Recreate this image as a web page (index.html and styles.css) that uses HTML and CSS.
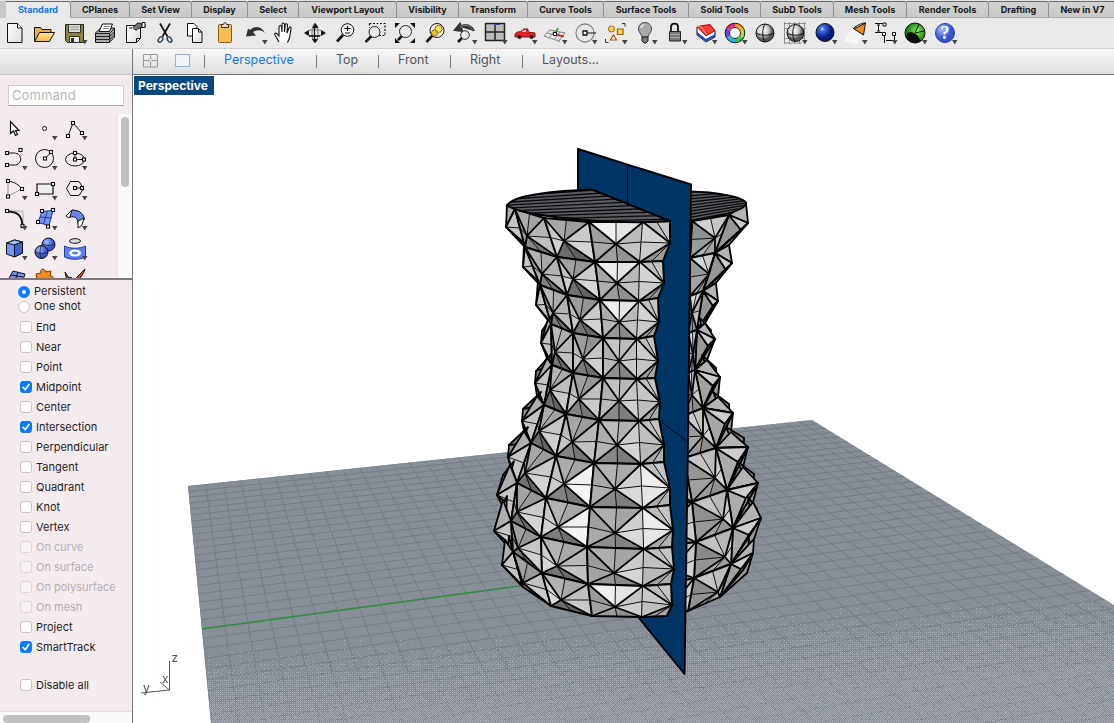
FILE: index.html
```html
<!DOCTYPE html>
<html lang="en">
<head>
<meta charset="utf-8">
<title>Perspective</title>
<link rel="stylesheet" href="styles.css">
</head>
<body>
<div class="app">
  <nav class="tabs" id="tabs"></nav>
  <div class="toolbar" id="toolbar"></div>
  <div class="body">
    <aside class="side">
      <div class="side-head"></div>
      <div class="cmd"><div class="cmd-box">Command</div></div>
      <div class="palette">
        <div class="tools" id="tools"></div>
        <div class="vtrack"><div class="vthumb"></div></div>
      </div>
      <div class="osnap">
        <div class="radio on"><i></i>Persistent</div>
        <div class="radio"><i></i>One shot</div>
        <div class="checks" id="checks"></div>
      </div>
      <div class="htrack"><div class="hthumb"></div></div>
    </aside>
    <main class="main">
      <div class="views">
        <svg class="layout-icon" width="60" height="25" viewBox="133 49 60 25" fill="none">
          <path d="M143.500 54.500h14v12.500h-14zM150.500 54v13M143 60.500h15" stroke="#999"/>
          <rect x="149" y="59" width="3" height="3" fill="#f4f4f4" stroke="#aaa" stroke-width=".6"/>
          <rect x="175.500" y="54.500" width="14" height="12" fill="#eef3fa" stroke="#7fb5f5"/>
        </svg>
        <span class="bar b0"></span><span class="view sel">Perspective</span>
        <span class="bar b1"></span><span class="view v2">Top</span>
        <span class="bar b2"></span><span class="view v3">Front</span>
        <span class="bar b3"></span><span class="view v4">Right</span>
        <span class="bar b4"></span><span class="view v5">Layouts...</span>
      </div>
      <div class="viewport">
        <canvas class="ground" id="ground" width="981" height="648"></canvas>
        <svg class="scene" id="scene" width="981" height="648" viewBox="133 75 981 648"></svg>
        <div class="vp-title">Perspective</div>
      </div>
    </main>
  </div>
</div>
<script src="app.js"></script>
</body>
</html>
```
FILE: styles.css
```css
* { box-sizing: border-box; }
body { margin: 0; font-family: Inter, "Liberation Sans", sans-serif; color: #1f1f1f; background: #fff; }
.app { width: 1114px; height: 723px; overflow: hidden; display: flex; flex-direction: column; }
.tabs { height: 18px; flex: none; display: flex; background: #c9c9c9; border-top: 1px solid #e4e4e4; padding-left: 6px; overflow: hidden; }
.tab { flex: none; height: 17px; border-top: 1px solid #6c6c6c; border-right: 1px solid #8f8f8f; border-bottom: 1px solid #aaa; border-radius: 0 3px 0 0; text-align: center; font-weight: 700; font-size: 9px; line-height: 15px; color: #161616; background: linear-gradient(#d2d2d2, #c9c9c9); white-space: nowrap; }
.tab.on { color: #1079f2; background: #e9e9e9; border-bottom-color: #e9e9e9; }
.toolbar { height: 31px; flex: none; display: flex; background: #e9e9e9; border-bottom: 1px solid #d9cdd0; }
.toolbar svg { flex: none; width: 30px; height: 30px; display: block; }
.body { flex: 1; display: flex; min-height: 0; }
.side { width: 133px; flex: none; background: #f4ebef; border-right: 1px solid #777; display: flex; flex-direction: column; }
.side-head { height: 26px; background: linear-gradient(#f3f3f3, #dcdcdc); border-bottom: 1px solid #c8c4c6; flex: none; }
.cmd { height: 39px; padding: 10px 8px 0; flex: none; }
.cmd-box { height: 21px; background: #fff; border: 1px solid #d4ccd0; border-bottom-color: #aaa; padding-left: 3px; font-size: 13px; line-height: 19px; color: #b9b9b9; letter-spacing: .1px; }
.palette { height: 166px; flex: none; display: flex; justify-content: space-between; border-bottom: 2px solid #7b777a; overflow: hidden; }
.tools { width: 90px; height: 180px; display: grid; grid-template-columns: repeat(3, 30px); grid-auto-rows: 30px; }
.tools svg { display: block; width: 30px; height: 30px; }
.vtrack { width: 15px; background: #fafafa; border-left: 1px solid #e6e2e4; padding: 3px 0 0 3px; }
.vthumb { width: 8px; height: 70px; border-radius: 4px; background: #c1c1c1; }
.osnap { flex: 1; padding: 4px 0 0 18px; font-size: 11px; }
.radio { height: 15px; display: flex; align-items: center; line-height: 15px; gap: 4px; }
.radio i { width: 12px; height: 12px; border-radius: 50%; background: #fff; border: 1px solid #c9c3c6; }
.radio.on i { border: 4px solid #0a7bfd; }
.checks { padding: 3px 0 0 2px; }
.check { height: 20px; display: flex; align-items: center; gap: 4px; white-space: nowrap; }
.check.last { margin-top: 18px; }
.check i { width: 12px; height: 12px; border-radius: 3px; background: #fff; border: 1px solid #c9c3c6; flex: none; }
.check.on i { background: #0a7bfd; border-color: #0a7bfd; }
.check i svg { display: block; width: 10px; height: 10px; }
.check.off { color: #b5aeb2; }
.check.off i { background: #f7f1f4; border-color: #dcd5d8; }
.htrack { height: 12px; flex: none; background: #fafafa; border-top: 1px solid #e2dcdf; padding: 3px 0 0 3px; }
.hthumb { width: 87px; height: 8px; border-radius: 4px; background: #c1c1c1; }
.main { flex: 1; display: flex; flex-direction: column; min-width: 0; }
.views { height: 26px; flex: none; display: flex; align-items: flex-start; background: linear-gradient(#f7f7f7, #dedede); border-bottom: 1px solid #777; font-size: 12.5px; line-height: 21px; color: #555; }
.view { white-space: nowrap; }
.view.sel { color: #1079f2; width: 92px; }
.bar { width: 1px; height: 13px; margin-top: 6px; background: #777; flex: none; }
.b0 { margin: 6px 19px 0 11px; }
.b1 { margin-right: 19px; }
.v2 { width: 42px; }
.b2 { margin-right: 19px; }
.v3 { width: 52px; }
.b3 { margin-right: 19px; }
.v4 { width: 52px; }
.b4 { margin-right: 19px; }
.viewport { position: relative; flex: 1; background: #fff; overflow: hidden; }
.ground, .scene { position: absolute; left: 0; top: 0; display: block; }
.vp-title { position: absolute; left: 1px; top: 1px; height: 19px; width: 80px; background: #05477f; color: #fff; font-weight: 700; font-size: 12px; line-height: 19px; padding-left: 4px; white-space: nowrap; }
.axis-label { font: 12px Inter, sans-serif; fill: #555; }
```
FILE: app.js
```js
const byId = id => document.getElementById(id);

/* tabs: label and width */
byId('tabs').innerHTML = [['Standard', 65], ['CPlanes', 59], ['Set View', 62], ['Display', 56], ['Select', 51],
  ['Viewport Layout', 98], ['Visibility', 62], ['Transform', 69], ['Curve Tools', 76], ['Surface Tools', 85],
  ['Solid Tools', 72], ['SubD Tools', 73], ['Mesh Tools', 73], ['Render Tools', 82], ['Drafting', 60], ['New in V7', 68]]
  .map((t, i) => `<div class="tab${i ? '' : ' on'}" style="width:${t[1]}px">${t[0]}</div>`).join('');

const arrow = '<path d="M22 22h5.500l-2.700 4.500z" fill="#444"/>';
const K = 'stroke="#111" fill="none"';
const ball = (x, y, r, c) => `<circle cx="${x}" cy="${y}" r="${r}" fill="url(#${c})" stroke="#111" stroke-width="1"/>`;
const defs = `<defs>
<linearGradient id="paper" x1="0" y1="0" x2="1" y2="1"><stop offset="0" stop-color="#fff"/><stop offset="1" stop-color="#ddd"/></linearGradient>
<linearGradient id="gold" x1="0" y1="0" x2="0" y2="1"><stop offset="0" stop-color="#ffe9a0"/><stop offset="1" stop-color="#f4b73c"/></linearGradient>
<radialGradient id="blueBall" cx=".35" cy=".3"><stop offset="0" stop-color="#cfe0ff"/><stop offset=".25" stop-color="#3f6df0"/><stop offset="1" stop-color="#061b80"/></radialGradient>
<radialGradient id="softBlue" cx=".35" cy=".3"><stop offset="0" stop-color="#a9bdfd"/><stop offset="1" stop-color="#3555cf"/></radialGradient>
<radialGradient id="greyBall" cx=".4" cy=".35"><stop offset="0" stop-color="#fff"/><stop offset=".6" stop-color="#ccc"/><stop offset="1" stop-color="#555"/></radialGradient>
<radialGradient id="greenBall" cx=".6" cy=".4"><stop offset="0" stop-color="#8df05c"/><stop offset="1" stop-color="#127a10"/></radialGradient>
</defs>`;
const page = '<path d="M7.500 5.500h10l4.500 4.500v14.500h-14.500z" fill="url(#paper)" stroke="#111"/><path d="M17.500 5.500v4.500h4.500" fill="#fff" stroke="#111"/>';

const toolbar = [
  defs + page,
  '<path d="M4.500 23V9.500h6l1.500 2h9v3" fill="#e9b13a" stroke="#111"/><path d="M4.500 23.500l5-9h15l-5 9z" fill="url(#gold)" stroke="#111"/>',
  '<path d="M5.500 6.500h18v18h-16l-2-2z" fill="#8b8540" stroke="#222"/><path d="M8.500 6.500h12v8h-12z" fill="#dadada" stroke="#333"/><path d="M10 9h9M10 11.500h9" stroke="#999"/><path d="M9.500 18.500h10v6h-10z" fill="#eee" stroke="#333"/><path d="M11 20h3v4h-3z" fill="#333"/>' + arrow,
  '<path d="M5.500 15l5-5h14v9l-5 5.500h-14z" fill="#aaa" stroke="#111"/><path d="M5.500 15.500h14l5-5M5.500 18.500h14l5-4.500M5.500 21.500h14l5-4.500M19.500 15v9" stroke="#222" fill="none"/><path d="M9 13.500l3.500-7.500h10l-3 7.500z" fill="#fff" stroke="#111"/><path d="M13 10.500h6M14 8.500h6" stroke="#888"/>',
  '<path d="M6.500 7.500h14v13l-4 4h-10z" fill="url(#paper)" stroke="#111"/><path d="M20.500 20.500h-4v4M9 10h3" fill="none" stroke="#111"/><path d="M13 9.500l4-4 3-.5 1 1h4v3.500h-4l-3 1-2 2z" fill="#777" stroke="#111"/><path d="M22 4.500h3v5h-3z" fill="#fff" stroke="#111"/>',
  '<path d="M10 5.500l7.500 13M20 5.500l-7.500 13" stroke="#111" stroke-width="1.700"/><g fill="none" stroke="#33455c" stroke-width="1.500"><ellipse cx="10.500" cy="21.500" rx="1.900" ry="3" transform="rotate(35 10.500 21.500)"/><ellipse cx="19.500" cy="21.500" rx="1.900" ry="3" transform="rotate(-35 19.500 21.500)"/></g>',
  '<path d="M7.500 5.500h6.500l3 3v9.500h-9.500z" fill="#fff" stroke="#111"/><path d="M12.500 10.500h6l3.500 3.500v10.500h-9.500z" fill="url(#paper)" stroke="#111"/><path d="M18.500 10.500v3.500h3.500" fill="none" stroke="#111"/>',
  '<rect x="8.500" y="6.500" width="13" height="18" rx="1" fill="#f8bd55" stroke="#8a5b10"/><path d="M11.500 9.500v-3h2c0-2.500 3-2.500 3 0h2v3z" fill="#ddd" stroke="#333"/>',
  '<path d="M10 12c5-5 12-4 15 3-4-4-8-3-12-1l3 3.500-10 1 2-8z" fill="#333"/>' + arrow,
  '<path d="M9 24l-4-7c-1-2 1-2.500 2-1l2 2V9c0-2 2.300-2 2.500 0l.5 5V6.500c0-2 2.500-2 2.500 0V14l.7-7c.3-2 2.500-1.500 2.300.3L17 15l2-5c.7-1.700 2.500-1 2 .7L19.500 20l-2 4.500" fill="#fff" stroke="#111" stroke-width="1.100"/>',
  '<ellipse cx="15" cy="15" rx="10" ry="3.200" fill="none" stroke="#777"/><ellipse cx="15" cy="15" rx="3" ry="9.500" fill="none" stroke="#777"/><path d="M14.500 8v14M9 18h11" stroke="#111" stroke-width="1.300"/><path d="M15 5l3.500 5h-6zM15 25l3-4h-6zM4 15l5-2.500v5zM26 15l-5-2.500v5z" fill="#111"/>',
  `<path d="M7 23.500l6-6.500" stroke="#111" stroke-width="2.600"/><circle cx="17.500" cy="12" r="6.300" fill="#f0f0f0" stroke="#111"/><path d="M14.500 10.500h6M17.500 8v5M15 15h5" stroke="#111" stroke-width="1.200"/>`,
  '<path d="M9.500 5.500h15.500v12h-12M9.500 5.500v4" fill="none" stroke="#111" stroke-width="1.200" stroke-dasharray="2 1.500"/><path d="M5.500 24l6-6" stroke="#111" stroke-width="2.500"/><circle cx="14.500" cy="14" r="5.500" fill="#e7e7e7" stroke="#222"/>',
  '<path d="M8 22l4-4" stroke="#111" stroke-width="2.500"/><circle cx="15.500" cy="13.500" r="6" fill="#ececec" stroke="#222"/><path d="M5 5h5l-5 5zM25 5h-5l5 5zM5 25h5l-5-5zM25 25h-5l5-5z" fill="#111"/>',
  '<path d="M6.500 24l6-6.500" stroke="#111" stroke-width="2.600"/><circle cx="17" cy="12.500" r="7" fill="#eee" stroke="#111"/><circle cx="18.500" cy="11" r="3.500" fill="#ffe24c" stroke="#9a7500"/><circle cx="14.500" cy="15" r="3" fill="#e8c52e" stroke="#9a7500"/>',
  '<path d="M10 9c6-4 11-1 14 4M10 6l-5 6 7 1z" stroke="#333" stroke-width="2.200" fill="#333"/><path d="M10 9c6-3.500 10-1 13 3" fill="none" stroke="#eee" stroke-width=".4"/><path d="M8 24l4-4" stroke="#111" stroke-width="2.500"/><circle cx="15" cy="17" r="4.300" fill="#eee" stroke="#222"/>' + arrow,
  '<path d="M5.500 5.500h19v17h-19z" fill="#bbb" stroke="#222" stroke-width="1.500"/><path d="M15 5.500v17M5.500 14h19" stroke="#222" stroke-width="1.500"/><path d="M14 6.500h6" stroke="#2849ca"/>' + arrow,
  '<path d="M5 16.500c1-3 4-2.500 6-3l3-2.500h4v3l7 1v4H5z" fill="#e52128" stroke="#8e0f14"/><path d="M13.500 12.500l-1.500 1.500h4v-2z" fill="#fff"/><circle cx="9.500" cy="19" r="2" fill="#222"/><circle cx="21.500" cy="19" r="2" fill="#222"/>' + arrow,
  '<path d="M4 18l16 5.500M7 15l16 4M10 12l15 3M4 18l6-6.500M9 20l6-8M14 22l6-8M19 23l6-8.500" stroke="#888" fill="none"/><path d="M15 16l3-6" stroke="#13902c" stroke-width="1.600"/><path d="M15 16l9 2.500" stroke="#d42020" stroke-width="1.600"/><path d="M13.500 14.500h3v3h-3z" fill="#fff" stroke="#111"/>' + arrow,
  '<circle cx="15" cy="15" r="9" fill="none" stroke="#888" stroke-width="1.300"/><path d="M15 15h11" stroke="#111"/><path d="M13 13h4v4h-4z" fill="#fff" stroke="#111" stroke-width="1.300"/>' + arrow,
  '<path d="M22 5.500h3v3M5.500 21v3.500h3" fill="none" stroke="#333"/><circle cx="11.500" cy="11" r="3" fill="#ffd94b" stroke="#a15b00"/><path d="M17.500 11h5.500v5.500h-5.500z" fill="#ffd94b" stroke="#a15b00" stroke-width="1.200"/><path d="M13.500 17l3 5h-6z" fill="#eee" stroke="#a15b00" stroke-width="1.200"/>' + arrow,
  '<path d="M12 19c0-3-3.500-4-3.500-8a6.500 6.500 0 0 1 13 0c0 4-3.500 5-3.500 8z" fill="#aaa" stroke="#444"/><path d="M12 19h6v4l-2 2h-2l-2-2z" fill="#777" stroke="#222"/><path d="M11 10c0-2 2-3 3-3" stroke="#eee" fill="none" stroke-width="1.500"/>' + arrow,
  '<path d="M11 14v-5c0-4.500 7-4.500 7 0v5" fill="none" stroke="#111" stroke-width="1.800"/><path d="M9.500 13.500h11v9.500h-11z" fill="#777" stroke="#222"/><path d="M10 16.500h10M10 19.500h10" stroke="#aaa"/>' + arrow,
  '<path d="M7 9l13-2 5 6v6l-9 5-9-7z" fill="#fff" stroke="#111"/><path d="M7 14l9 7 9-5v3l-9 5-9-7z" fill="#284cc0"/><path d="M7 8.500l13-2 5 6-9 5.500z" fill="#f0402f" stroke="#a10e10"/><path d="M7 8.500l4 .2 6 8" fill="none" stroke="#ff9b76"/>' + arrow,
  '<g fill="none" stroke-width="4"><path d="M15 7a8 8 0 0 1 7 4" stroke="#ff9a15"/><path d="M22 11a8 8 0 0 1 0 8" stroke="#a8e326"/><path d="M22 19a8 8 0 0 1-7 4" stroke="#2bcb57"/><path d="M15 23a8 8 0 0 1-7-4" stroke="#28b8ef"/><path d="M8 19a8 8 0 0 1 0-8" stroke="#6b3fe5"/><path d="M8 11a8 8 0 0 1 7-4" stroke="#f0287b"/></g><circle cx="15" cy="15" r="5.500" fill="#fff" stroke="#222"/><circle cx="15" cy="15" r="9.800" fill="none" stroke="#222"/>' + arrow,
  ball(15, 15, 9, 'greyBall') + '<path d="M6 15c5 3 13 3 18 0M15 6c-3 5-3 13 0 18" fill="none" stroke="#111"/>',
  '<path d="M4.500 4v22M9.500 4v22M14.500 4v22M19.500 4v22M24.500 4v18M4 5.500h22M4 10.500h22M4 20.500h20M4 25h18" stroke="#888" stroke-width=".9"/>' + ball(15.5, 15, 8.500, 'greyBall') + '<path d="M7 15c5 3 12 3 17 0M15 6.500c-3 5-3 12 0 17" fill="none" stroke="#111"/>' + arrow,
  ball(15, 14.500, 9, 'blueBall') + arrow,
  '<path d="M4 23l8-13 10 8-4 8z" fill="#fff" opacity=".6"/><path d="M13.500 10.500l12-5.500-2 12z" fill="#f28b22" stroke="#111"/><path d="M13.500 10.500c2-3 10-6 12-5.500L17 9.500z" fill="#fff0c8" stroke="#111"/>' + arrow,
  '<path d="M5 5.500h9M5 14.500h7M8.500 7v6M7 7h3M7 13h3M14.500 18v7M24.500 18v7M16 22.500h8" stroke="#111" fill="none"/><path d="M13 5h3v3h-3zM12.500 14.500h3v3h-3zM22.500 14.500h3v3h-3z" fill="#fff" stroke="#111"/>' + arrow,
  ball(15, 15, 10, 'greenBall') + '<path d="M15 15l4-9M15 15l9-2" stroke="#111" fill="none"/><path d="M6 20l1-5 4-1 3 1 3 2 4 6-5 2-6-1z" fill="#0b0b0b"/>' + arrow,
  '<circle cx="15" cy="15" r="9.500" fill="url(#softBlue)" stroke="#2440a5"/><text x="15" y="21" text-anchor="middle" font-family="Liberation Serif, serif" font-weight="700" font-size="18" fill="#fff">?</text>' + arrow
];
const svg = s => `<svg viewBox="0 0 30 30">${s}</svg>`;
byId('toolbar').innerHTML = toolbar.map(svg).join('');

/* left palette */
const nodes = (...p) => p.map(q => `<rect x="${q[0] - 1.500}" y="${q[1] - 1.500}" width="3" height="3" fill="#fff" stroke="#111" stroke-width="1.100"/>`).join('');
byId('tools').innerHTML = [
  '<path d="M10.500 7.500v12l3-2.500 2 4.500 2-1-2-4h3.500z" fill="#fff" stroke="#111" stroke-width="1.200"/>',
  '<circle cx="14.500" cy="14.500" r="2" fill="#fff" stroke="#111"/>' + arrow,
  `<path d="M8 22l5-13 9 10" ${K}/>` + nodes([8, 22], [13, 9], [22, 19]) + arrow,
  `<path d="M7 9h7c9 0 9 12 0 12H7" ${K}/>` + nodes([7, 9], [20.500, 6], [7, 21]) + arrow,
  `<circle cx="14.500" cy="14.500" r="9" ${K}/><path d="M15 14.500l6-6" ${K}/>` + nodes([15, 14.500], [21, 8]) + arrow,
  `<ellipse cx="15" cy="15.500" rx="9.500" ry="6.500" ${K}/><path d="M15 9v6.500h9" ${K}/>` + nodes([15, 9], [15, 15.500], [24, 15.500]) + arrow,
  `<path d="M8 7c7 1 11 4 14 8" ${K}/><path d="M8 7v15l14-7" stroke="#999" fill="none"/>` + nodes([8, 7], [22, 15], [8, 22.500]) + arrow,
  `<path d="M7 10h16v10H7z" fill="#eee" stroke="#111" stroke-width="1.200"/>` + nodes([23, 10], [7, 20]) + arrow,
  `<path d="M10.500 7.500h8.500l4.500 7-4.500 7h-8.500l-4-7z" ${K}/><path d="M15 14h7" ${K}/>` + nodes([15, 14], [22, 14]) + arrow,
  '<path d="M7 7h16v15" stroke="#aaa" fill="none"/><path d="M7 7.500c11 0 15 4 15.500 15" fill="none" stroke="#111" stroke-width="2"/>' + nodes([7, 7], [22.500, 22]) + arrow,
  '<path d="M12 7.500l11-1-4 15-11-3z" fill="#7793f4" stroke="#223b9b"/><path d="M10 13l11.500 1M17.500 7l-4 13" stroke="#223b9b"/>' + nodes([12, 7], [23, 6], [8, 18], [18, 22.500]) + arrow,
  '<path d="M6 12l6-6 3 1-6 7z" fill="#fff" stroke="#111"/><path d="M12 6c8 0 13 5 12 10l-6 3c0-5-3-7-8-6z" fill="#6887ed" stroke="#111"/><path d="M18 17l6-3-2 7-4 3z" fill="#fff" stroke="#111"/>' + arrow,
  '<path d="M6.500 9l8-3 8 2v11l-8 4-8-3z" fill="#7494f8" stroke="#111"/><path d="M6.500 9l8 2 8-3-8-2z" fill="#a7bbff" stroke="#111"/><path d="M14.500 11v12l8-4V8z" fill="#3e61d6" stroke="#111"/>' + arrow,
  '<g fill="url(#softBlue)" stroke="#111"><circle cx="18.500" cy="10.500" r="6.500"/><circle cx="11.500" cy="18" r="6.500"/></g><path d="M5 18c4 2 9 2 13 0M11.500 11.500c-2 4-2 9 0 13M13 10c4 2 8 2 12 0" fill="none" stroke="#111" stroke-width=".7"/>' + arrow,
  '<ellipse cx="15" cy="7" rx="5.500" ry="2.300" fill="#ddd" stroke="#111"/><path d="M4.500 12c6 3 15 3 21 0v11c-6 3-15 3-21 0z" fill="#5f80ec" stroke="#223b9b"/><ellipse cx="15" cy="19" rx="6" ry="3.500" fill="#fff"/><ellipse cx="15" cy="19" rx="3" ry="1.500" fill="#5f80ec"/>' + arrow,
  '<path d="M8 16l5-9 12 3-4 12-14-3z" fill="#7793f4" stroke="#111"/><path d="M11 11l12 2M18 8l-4 12" stroke="#111"/>',
  '<path d="M6 10l5-1c-2-5 5-5 4-1l6-1-1 5c4-1 4 5 0 4v6H8z" fill="#f28c22" stroke="#803b00"/>',
  '<path d="M5 8l4 6 2-1 5 10-9-6zM25 5l-8 8-2 9 9-14z" fill="#e84419" stroke="#111"/>'
].map(svg).join('');

/* object snap list: label and state */
byId('checks').innerHTML = ['End', 'Near', 'Point', '+Midpoint', 'Center', '+Intersection', 'Perpendicular', 'Tangent', 'Quadrant',
  'Knot', 'Vertex', '-On curve', '-On surface', '-On polysurface', '-On mesh', 'Project', '+SmartTrack', 'Disable all'].map(s => {
  const on = s[0] === '+', off = s[0] === '-', name = on || off ? s.slice(1) : s;
  return `<div class="check${on ? ' on' : ''}${off ? ' off' : ''}${name === 'Disable all' ? ' last' : ''}"><i>${on ? '<svg viewBox="0 0 10 10"><path d="M2 5.300l2.200 2.400L8 2.300" fill="none" stroke="#fff" stroke-width="1.600" stroke-linecap="round"/></svg>' : ''}</i>${name}</div>`;
}).join('');

/* ground plane with perspective grid */
const ctx = byId('ground').getContext('2d');
ctx.translate(-133, -75);
const groundPath = () => { ctx.beginPath(); [[188, 486], [812, 420], [1114, 605], [1114, 723], [211, 723]].forEach(p => ctx.lineTo(p[0], p[1])); ctx.closePath(); };
const project = (u, v) => {
  u /= 20; v /= 20;
  const w = 1 + .0706 * u - .235 * v;
  return [((312 + 57.3) * u + (14 - 47.5) * v + 188) / w, ((-33.25 + 29.6) * u + (143 - 147.8) * v + 486) / w];
};
ctx.save();
groundPath();
ctx.fillStyle = '#878e96';
ctx.fill();
ctx.clip();
ctx.strokeStyle = '#737981';
ctx.lineWidth = .9;
const seg = (a, b) => { ctx.beginPath(); ctx.moveTo(a[0], a[1]); ctx.lineTo(b[0], b[1]); ctx.stroke(); };
for (let i = 0; i <= 40; i++) {
  seg(project(i, 0), project(i, 40));
  seg(project(0, i), project(41, i));
}
const bayer = [0, 8, 2, 10, 12, 4, 14, 6, 3, 11, 1, 9, 15, 7, 13, 5];
ctx.fillStyle = '#a8adb7';
for (let y = 590; y < 723; y++) for (let x = 190; x < 1114; x++) {
  const start = 648 - (x - 205) * .065;
  const h = Math.abs(Math.sin(x * 12.99 + y * 78.23) * 43758.5) % 1;
  const t = Math.min(.48, (y - start) / 170);
  if ((bayer[(y & 3) * 4 + (x & 3)] + h * 3) / 17 < t) ctx.fillRect(x, y, 1, 1);
}
ctx.strokeStyle = '#2d8f3d';
ctx.lineWidth = 1.700;
seg([202, 629], [530, 584.500]);
ctx.restore();

/* vase: ring corners and pyramid apexes, left to right, top to bottom */
const rings = [
  [[507,205],[515,209],[544,218],[589,222],[643,222],[670,221]],
  [[524,243],[525,247],[557,257],[595,262],[640,262],[663,261]],
  [[538,281],[540,285],[567,295],[600,300],[639,301],[658,298]],
  [[548,319],[551,324],[573,333],[603,338],[637,339],[654,336]],
  [[547,358],[552,365],[573,373],[603,378],[637,379],[655,378]],
  [[537,396],[544,405],[566,414],[599,420],[639,421],[659,419]],
  [[524,431],[531,443],[556,456],[594,463],[641,464],[664,462]],
  [[510,465],[517,483],[546,498],[590,507],[643,508],[670,505]],
  [[503,500],[511,521],[541,537],[587,547],[644,549],[672,547]],
  [[505,540],[513,552],[542,573],[588,584],[643,586],[671,584]],
  [[521,584],[523,587],[551,606],[592,616],[642,617],[667,616]]];
const apex = [
  [[506,227],[527,236],[564,241],[616,244],[670,243]],
  [[523,267],[542,274],[573,279],[617,283],[664,283]],
  [[536,305],[553,313],[580,320],[619,322],[659,322]],
  [[541,343],[555,352],[583,359],[619,361],[658,361]],
  [[535,383],[550,390],[579,399],[619,401],[660,402]],
  [[522,421],[539,431],[572,442],[617,445],[664,445]],
  [[508,457],[525,473],[564,484],[615,489],[670,488]],
  [[497,495],[517,512],[558,527],[615,533],[673,530]],
  [[494,531],[518,548],[557,566],[614,573],[674,569]],
  [[502,565],[523,583],[561,600],[615,607],[672,605]]];
const ringsR = [
  [[648,221],[692,221],[729,215],[746,203]],
  [[658,262],[690,258],[715,253],[729,245]],
  [[660,300],[690,296],[703,291],[716,283]],
  [[660,337],[688,333],[697,330],[705,323]],
  [[660,378],[688,373],[695,370],[707,360]],
  [[655,419],[683,416],[703,408],[718,397]],
  [[650,464],[684,458],[716,448],[731,432]],
  [[645,507],[692,502],[727,490],[743,467]],
  [[645,549],[696,542],[733,528],[753,502]],
  [[645,590],[694,578],[731,564],[754,539]],
  [[645,622],[688,611],[720,597],[747,573]]];
const apexR = [
  [[678,243],[715,238],[741,230],[748,223]],
  [[674,283],[709,274],[726,270],[732,263]],
  [[672,321],[692,313],[713,306],[718,301]],
  [[672,361],[693,354],[708,346],[715,339]],
  [[670,403],[692,395],[713,386],[720,377]],
  [[668,444],[703,436],[725,424],[733,413]],
  [[668,486],[715,478],[738,462],[748,447]],
  [[668,529],[723,519],[746,498],[758,483]],
  [[670,570],[725,557],[749,535],[761,518]],
  [[672,606],[718,592],[743,570],[753,553]]];
const grey = v => `rgb(${v},${v},${v + 1})`;
const mid = (a, b) => [(a[0] + b[0]) / 2, (a[1] + b[1]) / 2];
const pts = a => a.map(p => p.join()).join(' ');
const line = (w, ...p) => `<polyline points="${pts(p)}" fill="none" stroke="#000" stroke-width="${w}"/>`;
/* one facet, split along its centre line into two slightly different tones */
const facet = (a, b, c, tone, k) => {
  const m = mid(a, b);
  return `<polygon points="${pts([a, m, c])}" fill="${grey(tone)}"/><polygon points="${pts([m, b, c])}" fill="${grey(Math.min(245, tone + k))}"/>` + line(.9, m, c);
};
const jitter = (i, j, k) => Math.round(Math.sin(i * 5.7 + j * 3.1 + k * 2.3) * 12);
const pyramid = (a, b, c, d, p, tones, i, j) => {
  const t = tones.map((v, k) => Math.max(95, Math.min(240, v + (v > 230 ? 0 : jitter(i, j, k)))));
  return facet(a, b, p, t[0], -10) + facet(b, c, p, t[1], 10) + facet(d, c, p, t[2], -12) + facet(a, d, p, t[3], 9) +
    line(1.800, a, p, c) + line(1.800, b, p, d) + `<polygon points="${pts([a, b, c, d])}" fill="none" stroke="#000" stroke-width="1.900" stroke-linejoin="round"/>`;
};
/* outermost half pyramid that forms the silhouette */
const spike = (a, p, b, tone) => `<polygon points="${pts([a, p, b])}" fill="${grey(tone)}" stroke="#000" stroke-width="1.800" stroke-linejoin="round"/>`;
const edge = (a, p, b, q, r, tone) => spike(a, p, q, tone) + spike(q, p, r, tone + 22) + spike(r, p, b, tone - 26) + line(.9, mid(q, r), p);

let left = '', right = '';
for (let i = 0; i < 10; i++) {
  const r = rings[i], s = rings[i + 1], p = apex[i];
  if (i > 2) {
    const far = [p[0][0] + (i > 6 ? 6 : 1), p[0][1] - (i > 6 ? 20 : 12)];
    left += spike([r[0][0] + 4, r[0][1] - 4], far, [s[0][0], s[0][1]], 135) + spike(far, p[0], r[1], 150);
  }
  left += edge(r[0], p[0], s[0], r[1], s[1], 175);
  const base = [[172, 190, 122, 160], [168, 192, 120, 196], [i < 3 || i === 9 ? 238 : 186, 196, 148, 165]];
  if (i === 6 || i === 7) base[1][1] = 240;
  for (let j = 1; j < 4; j++) left += pyramid(r[j], r[j + 1], s[j + 1], s[j], p[j], base[j - 1], i, j);
  left += facet(r[4], r[5], p[4], 190, 6) + facet(r[4], s[4], p[4], i === 6 || i === 7 ? 238 : 200 + jitter(i, 4, 1), -8) + facet(s[4], s[5], p[4], 158 + jitter(i, 2, 5), 8) +
    line(1.800, r[4], p[4], s[4]) + line(2, r[4], r[5], p[4], s[5], s[4]);
  const R = ringsR[i], S = ringsR[i + 1], P = apexR[i];
  if (i > 2) right += spike([R[3][0] - 5, R[3][1] - 5], [P[3][0] - 4, P[3][1] - 9], S[3], 145);
  right += edge(R[3], P[3], S[3], R[2], S[2], 180);
  const rb = [[185, 205, 150, 168], [205, 190, 165, 150], [195, 180, 150, 195]];
  for (let j = 2; j >= 0; j--) {
    if (j < 2) right += pyramid(R[j], R[j + 1], S[j + 1], S[j], P[j], rb[j], i, j + 6);
    else right += spike(R[2], P[2], S[2], 160 + jitter(i, 1, 1)) + spike(R[2], P[2], P[3], 205) + spike(S[2], P[2], P[3], 175);
  }
}
/* striped caps */
let stripes = '';
for (let i = 0; i < 13; i++) stripes += `<path d="M500 ${194 + i * 2.900}L680 ${180 + i * 3.900}" stroke="#08090a" stroke-width="1.300"/>`;
let stripesR = '';
for (let i = 0; i < 10; i++) stripesR += `<path d="M688 ${196 + i * 3.100}L748 ${191 + i * 2.300}" stroke="#08090a" stroke-width="1.300"/>`;
const capL = 'M507 206C509 199 530 192 592 189.500L670 221C622 225 540 218 515 209Z';
const capR = 'M690 191.500C716 192 744 197 746 203C747 208 730 216 690 221Z';
byId('scene').innerHTML = `<defs><clipPath id="behind"><path d="M690.500 75H800V723H684Z"/></clipPath>
<clipPath id="cl"><path d="${capL}"/></clipPath><clipPath id="cr"><path d="${capR}"/></clipPath></defs>
<g clip-path="url(#behind)">${right}</g>
<path d="${capR}" fill="#595b60"/><g clip-path="url(#cr)">${stripesR}</g><path d="${capR}" fill="none" stroke="#000" stroke-width="1.800"/>
<path d="M578 149L691 184.500L688 440L684.500 674L639 618L600 500V198H578Z" fill="#003566" stroke="#000" stroke-width="1.900" stroke-linejoin="round"/>
<path d="M627.500 164.500V206M659 420L688 442" stroke="#000" fill="none"/>
<g>${left}</g>
<path d="${capL}" fill="#595b60"/><g clip-path="url(#cl)">${stripes}</g><path d="${capL}" fill="none" stroke="#000" stroke-width="2"/>
<path d="M169.500 661V690L141 693M169.500 690L160 682" fill="none" stroke="#555"/>
<text class="axis-label" x="171.500" y="662">z</text><text class="axis-label" x="162" y="683">x</text><text class="axis-label" x="143" y="692">y</text>`;
```
